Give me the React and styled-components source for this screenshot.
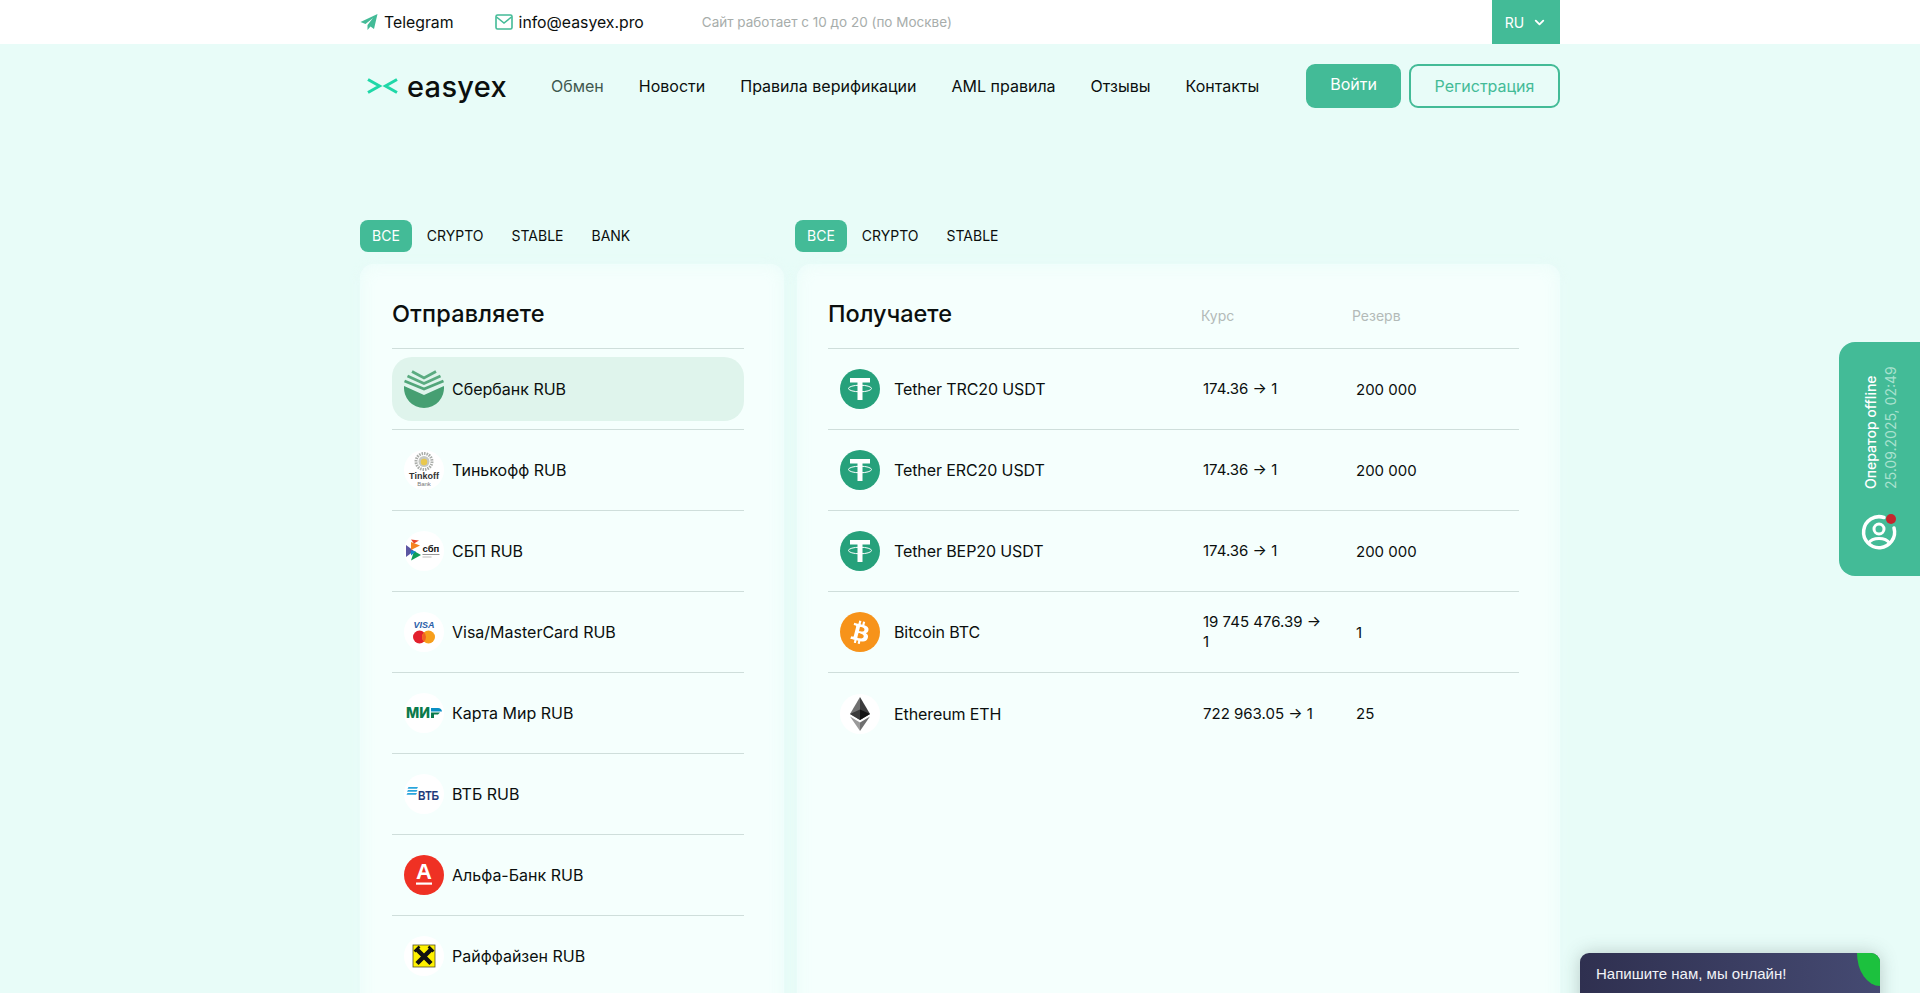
import styled, { createGlobalStyle } from "styled-components"
import { FaBtc } from "react-icons/fa"
import { ChevronDown } from "lucide-react"

const green = "#43bb97"

const GlobalStyle = createGlobalStyle`
    * { box-sizing: border-box; }
    html, body { margin: 0; height: 100%; overflow: hidden; }
    body {
        background: #e8fcf8;
        color: #0b0f0e;
        font-family: Inter, "Noto Sans", sans-serif;
        font-size: 16px;
    }
`

const Page = styled.div`
    height: 993px;
    overflow: hidden;
    position: relative;
`

const Container = styled.div`
    width: 1200px;
    margin: 0 auto;
`

const TopBar = styled.div`
    background: #fff;
    height: 44px;
`

const TopInner = styled(Container)`
    display: flex;
    align-items: center;
    height: 100%;
`

const TopLink = styled.a`
    display: flex;
    align-items: center;
    gap: 6px;
    margin-right: 41px;
    font-size: 15.8px;
    color: #0b0f0e;
`

const Schedule = styled.span`
    margin-left: 17px;
    font-size: 13.5px;
    color: #a7adab;
`

const Lang = styled.div`
    margin-left: auto;
    width: 68px;
    height: 44px;
    background: ${green};
    color: #fff;
    font-size: 14px;
    display: flex;
    align-items: center;
    justify-content: center;
    gap: 8px;
`

const Header = styled(Container)`
    display: flex;
    align-items: center;
    padding: 20px 0;
`

const Logo = styled.div`
    width: 191px;
    padding-left: 7px;
    display: flex;
    align-items: center;
    gap: 9px;
    font-size: 29px;
    font-weight: 500;
    line-height: 1;
    letter-spacing: 0.3px;
`

const Nav = styled.nav`
    display: flex;
    gap: 35px;
`

const NavLink = styled.a`
    font-size: 16px;
    color: ${(p) => (p.$active ? "#40584f" : "#0b0f0e")};
`

const Actions = styled.div`
    margin-left: auto;
    display: flex;
    gap: 8px;
`

const Button = styled.button`
    height: 44px;
    border-radius: 9px;
    font-family: inherit;
    font-size: 16px;
    border: 2px solid ${green};
    background: ${(p) => (p.$outline ? "transparent" : green)};
    color: ${(p) => (p.$outline ? "#43bb97" : "#fff")};
    width: ${(p) => (p.$outline ? "151px" : "95px")};
    padding: ${(p) => (p.$outline ? "0" : "0 0 4px")};
`

const Columns = styled(Container)`
    display: grid;
    grid-template-columns: 424px 763px;
    column-gap: 13px;
    row-gap: 12px;
    padding-top: 92px;
`

const Tabs = styled.div`
    display: flex;
    align-items: center;
    height: 32px;
    margin-left: ${(p) => (p.$shift ? "-2px" : "0")};
`

const Tab = styled.button`
    height: 32px;
    padding: 0 12px 2px;
    margin-right: ${(p) => (p.$active ? "3px" : "4px")};
    border: 0;
    border-radius: 8px;
    font-family: inherit;
    font-size: 14px;
    color: ${(p) => (p.$active ? "#fff" : "#0b0f0e")};
    background: ${(p) => (p.$active ? green : "transparent")};
`

const Panel = styled.section`
    background: #f5fffd;
    border-radius: 14px;
    box-shadow: inset 0 0 16px rgba(232, 252, 248, 0.9), 0 0 12px rgba(232, 252, 248, 0.6);
    padding: 0 ${(p) => p.$right}px 0 ${(p) => p.$left}px;
    height: 900px;
`

const PanelHead = styled.div`
    display: flex;
    align-items: center;
    height: 85px;
    padding-top: 14px;
    border-bottom: 1px solid #cfdedb;
`

const Title = styled.h2`
    margin: 0;
    font-size: 23.5px;
    font-weight: 500;
    letter-spacing: ${(p) => (p.$grow ? "0" : "0.2px")};
    flex: ${(p) => (p.$grow ? "0 0 373px" : "none")};
`

const ColumnHint = styled.span`
    font-size: 14px;
    color: #b3bab8;
    padding-top: 4px;
    flex: 0 0 151px;
`

const Row = styled.div`
    display: flex;
    align-items: center;
    height: 81px;
    border-bottom: ${(p) => (p.$last ? "0" : "1px solid #cfdedb")};
`

const RowBody = styled.div`
    display: flex;
    align-items: center;
    gap: 8px;
    width: 100%;
    height: 64px;
    padding-left: 12px;
    border-radius: 20px;
    background: ${(p) => (p.$active ? "#dff4ec" : "transparent")};
`

const RateRow = styled(Row)`
    padding-left: 12px;
    font-size: 15px;
`

const RateName = styled.div`
    display: flex;
    align-items: center;
    gap: 14px;
    flex: 0 0 363px;
    font-size: 16px;
    letter-spacing: -0.1px;
`

const Rate = styled.div`
    flex: 0 0 122px;
    margin-right: 31px;
    line-height: 20px;
`

const Mark = styled.svg`
    width: 40px;
    height: 40px;
    flex: none;
    display: block;
`

const BtcMark = styled.div`
    width: 40px;
    height: 40px;
    flex: none;
    border-radius: 50%;
    background: #f7931a;
    color: #fff;
    display: flex;
    align-items: center;
    justify-content: center;
    font-size: 23px;
    svg { transform: rotate(14deg); }
`

const Operator = styled.aside`
    position: absolute;
    top: 342px;
    right: 0;
    width: 81px;
    height: 234px;
    background: ${green};
    border-radius: 16px 0 0 16px;
    display: flex;
    flex-direction: column;
    align-items: center;
    padding-top: 32px;
`

const OperatorText = styled.div`
    writing-mode: vertical-rl;
    transform: rotate(180deg);
    display: flex;
    flex-direction: column;
    height: 115px;
    gap: 2px;
    font-size: 14px;
    line-height: 18px;
    margin-right: -2px;
    white-space: nowrap;
`

const OperatorName = styled.span`
    color: #fff;
    font-weight: 500;
`

const OperatorDate = styled.span`
    color: #a9e2cf;
`

const OperatorIcon = styled.svg`
    width: 38px;
    height: 38px;
    margin: 24px 0 0 -2px;
`

const Chat = styled.div`
    position: absolute;
    left: 1580px;
    top: 953px;
    width: 300px;
    height: 60px;
    padding: 12px 16px;
    background: linear-gradient(90deg, #2f3050, #454a72);
    border-radius: 9px 9px 0 0;
    box-shadow: 0 0 18px rgba(60, 80, 80, 0.28);
    color: #f2f3f7;
    font-family: "Liberation Sans", Arial, sans-serif;
    font-size: 15px;
    line-height: 18px;
    overflow: hidden;
`

const ChatLeaf = styled.span`
    position: absolute;
    top: 0;
    right: 0;
    width: 23px;
    height: 33px;
    background: #1cc13e;
    border-radius: 0 0 0 100%;
`

function TelegramIcon() {
    return (
        <svg width="18" height="18" viewBox="0 0 18 18">
            <path d="M17.5 1 .5 9l5 2 7.500-6-5.500 7v5l3-3.500 3.500 2.500z" fill={green} />
        </svg>
    )
}

function MailIcon() {
    return (
        <svg width="18" height="16" viewBox="0 0 18 16" fill="none" stroke={green} strokeWidth="1.6">
            <rect x="1" y="1" width="16" height="14" rx="1.5" />
            <path d="M1.5 3 9 9l7.500-6" />
        </svg>
    )
}

function LogoMark() {
    return (
        <svg width="31" height="16" viewBox="0 0 31 16" fill="none" stroke="#1fd8a8" strokeWidth="3">
            <path d="M1 1.5 12.500 8 1 14.500" />
            <path d="M30 1.5 18.500 8 30 14.500" />
        </svg>
    )
}

function Sber() {
    return (
        <Mark viewBox="0 -2 40 40">
            <path d="M.1 15 20 24 39.900 15A20 20 0 1 1 .1 15z" fill="#469f72" />
            <path d="M.5 10 20 18 39.500 10" fill="none" stroke="#52a67a" strokeWidth="2.800" />
            <path d="M3.500 5 20 12.500 36.500 5" fill="none" stroke="#5aab80" strokeWidth="2.800" />
            <path d="M8 .5 20 7 32 .5" fill="none" stroke="#5aab80" strokeWidth="2.800" />
        </Mark>
    )
}

function Tinkoff() {
    return (
        <Mark viewBox="0 0 40 40">
            <circle cx="20" cy="20" r="20" fill="#fff" />
            <circle cx="20" cy="11.500" r="8" fill="none" stroke="#a9aca8" strokeWidth="3" strokeDasharray="1.500 1" />
            <circle cx="20" cy="11.500" r="5.500" fill="#c6c8c2" />
            <circle cx="20" cy="12" r="3.200" fill="#e9c84d" />
            <text x="20" y="28.500" textAnchor="middle" fontFamily="Liberation Sans" fontWeight="700" fontSize="9" fill="#333">Tinkoff</text>
            <text x="20" y="36" textAnchor="middle" fontFamily="Liberation Sans" fontSize="6" fill="#777">Bank</text>
        </Mark>
    )
}

function Sbp() {
    return (
        <Mark viewBox="0 0 40 40">
            <circle cx="20" cy="20" r="20" fill="#fff" />
            <path d="M2 14l8 6-8 6z" fill="#5b57a2" />
            <path d="M7 11l9 3.500-9 4.500z" fill="#f58220" />
            <path d="M7 8.500l8 1-5 3z" fill="#e8452c" />
            <path d="M10 20l7 4-10 5.500z" fill="#0f9d58" />
            <path d="M7 19.500l5 1-5 4z" fill="#1487c9" />
            <text x="18.500" y="20.500" fontFamily="Liberation Sans" fontWeight="700" fontSize="9.500" fill="#111">сбп</text>
            <rect x="18.500" y="23" width="17" height="1" fill="#999" />
            <rect x="18.500" y="25.500" width="9" height="1" fill="#bbb" />
        </Mark>
    )
}

function Visa() {
    return (
        <Mark viewBox="0 0 40 40">
            <circle cx="20" cy="20" r="20" fill="#fff" />
            <text x="20" y="16" textAnchor="middle" fontFamily="Liberation Sans" fontWeight="700" fontStyle="italic" fontSize="9" fill="#2a5ea8">VISA</text>
            <circle cx="15.500" cy="25" r="6.500" fill="#e2202c" />
            <circle cx="24.500" cy="25" r="6.500" fill="#f79e1b" />
            <path d="M20 20.300a6.500 6.500 0 0 1 0 9.400 6.500 6.500 0 0 1 0-9.400z" fill="#f26122" />
        </Mark>
    )
}

function Mir() {
    return (
        <Mark viewBox="0 0 40 40">
            <circle cx="20" cy="20" r="20" fill="#fff" />
            <text x="2" y="25" fontFamily="Inter" fontWeight="800" fontSize="14" fill="#0b7a4b" textLength="24" lengthAdjust="spacingAndGlyphs">МИ</text>
            <path d="M27 15h7a4 4 0 0 1 4 3.500H27z" fill="#0a8fc4" />
            <path d="M27 19.500h9l-2 2h-4V25h-3z" fill="#0b7a4b" />
        </Mark>
    )
}

function Vtb() {
    return (
        <Mark viewBox="0 0 40 40">
            <circle cx="20" cy="20" r="20" fill="#fff" />
            <path d="M4.500 13H14l-1 1.800H3.500zM4 16H13.500l-1 1.800H3zM3.500 19H13l-1 1.800H2.500z" fill="#2aa5dc" />
            <text x="14" y="25.500" fontFamily="Liberation Sans" fontWeight="700" fontSize="12.500" fill="#1f3a7a" textLength="21" lengthAdjust="spacingAndGlyphs">ВТБ</text>
        </Mark>
    )
}

function Alfa() {
    return (
        <Mark viewBox="0 0 40 40">
            <circle cx="20" cy="20" r="20" fill="#ef3124" />
            <text x="20" y="24" textAnchor="middle" fontFamily="Liberation Sans" fontWeight="700" fontSize="22" fill="#fff">А</text>
            <rect x="12" y="27.500" width="16" height="2.200" fill="#fff" />
        </Mark>
    )
}

function Raiffeisen() {
    return (
        <Mark viewBox="0 0 40 40">
            <circle cx="20" cy="20" r="20" fill="#fff" />
            <rect x="9" y="9" width="22" height="22" fill="#fff100" stroke="#55532a" strokeWidth="0.8" />
            <path d="M13 27.500 27 13.500M13 13.500l14 14" stroke="#111" strokeWidth="4.500" />
            <path d="M10.500 15.500l5-5M24.500 10.500l5 5" stroke="#111" strokeWidth="2.500" />
        </Mark>
    )
}

function Tether() {
    return (
        <Mark viewBox="0 0 40 40">
            <circle cx="20" cy="20" r="20" fill="#26a17b" />
            <path d="M10 9h20v4.500h-7.500V31h-5V13.500H10z" fill="#fff" />
            <ellipse cx="20" cy="19.500" rx="11.500" ry="3.300" fill="none" stroke="#fff" strokeWidth="1" />
        </Mark>
    )
}

function Bitcoin() {
    return (
        <BtcMark>
            <FaBtc />
        </BtcMark>
    )
}

function Ethereum() {
    return (
        <Mark viewBox="0 0 40 40">
            <circle cx="20" cy="20" r="20" fill="#fff" />
            <path d="M20 3 10 20l10 6z" fill="#6f6f6f" />
            <path d="M20 3l10 17-10 6z" fill="#3c3c3d" />
            <path d="M10 20l10-4.500V26z" fill="#3a3a3a" />
            <path d="M30 20l-10-4.500V26z" fill="#141414" />
            <path d="M10 22.500 20 37V28.500z" fill="#9a9a9a" />
            <path d="M30 22.500 20 37V28.500z" fill="#6f6f6f" />
        </Mark>
    )
}

const sendList = [
    { name: "Сбербанк RUB", Icon: Sber, active: true },
    { name: "Тинькофф RUB", Icon: Tinkoff },
    { name: "СБП RUB", Icon: Sbp },
    { name: "Visa/MasterCard RUB", Icon: Visa },
    { name: "Карта Мир RUB", Icon: Mir },
    { name: "ВТБ RUB", Icon: Vtb },
    { name: "Альфа-Банк RUB", Icon: Alfa },
    { name: "Райффайзен RUB", Icon: Raiffeisen },
]

const receiveList = [
    { name: "Tether TRC20 USDT", Icon: Tether, rate: "174.36 → 1", reserve: "200 000" },
    { name: "Tether ERC20 USDT", Icon: Tether, rate: "174.36 → 1", reserve: "200 000" },
    { name: "Tether BEP20 USDT", Icon: Tether, rate: "174.36 → 1", reserve: "200 000" },
    { name: "Bitcoin BTC", Icon: Bitcoin, rate: "19 745 476.39 → 1", reserve: "1" },
    { name: "Ethereum ETH", Icon: Ethereum, rate: "722 963.05 → 1", reserve: "25", last: true },
]

const menu = ["Обмен", "Новости", "Правила верификации", "AML правила", "Отзывы", "Контакты"]

export default function App() {
    return (
        <Page>
            <GlobalStyle />
            <TopBar>
                <TopInner>
                    <TopLink><TelegramIcon />Telegram</TopLink>
                    <TopLink><MailIcon />info@easyex.pro</TopLink>
                    <Schedule>Сайт работает с 10 до 20 (по Москве)</Schedule>
                    <Lang>RU <ChevronDown size={15} strokeWidth={3} /></Lang>
                </TopInner>
            </TopBar>

            <Header>
                <Logo><LogoMark />easyex</Logo>
                <Nav>
                    {menu.map((item, i) => (
                        <NavLink key={item} $active={i === 0}>{item}</NavLink>
                    ))}
                </Nav>
                <Actions>
                    <Button>Войти</Button>
                    <Button $outline>Регистрация</Button>
                </Actions>
            </Header>

            <Columns>
                <Tabs>
                    <Tab $active>ВСЕ</Tab>
                    <Tab>CRYPTO</Tab>
                    <Tab>STABLE</Tab>
                    <Tab>BANK</Tab>
                </Tabs>
                <Tabs $shift>
                    <Tab $active>ВСЕ</Tab>
                    <Tab>CRYPTO</Tab>
                    <Tab>STABLE</Tab>
                </Tabs>

                <Panel $left={32} $right={40}>
                    <PanelHead>
                        <Title>Отправляете</Title>
                    </PanelHead>
                    {sendList.map(({ name, Icon, active }) => (
                        <Row key={name}>
                            <RowBody $active={active}>
                                <Icon />
                                {name}
                            </RowBody>
                        </Row>
                    ))}
                </Panel>

                <Panel $left={31} $right={41}>
                    <PanelHead>
                        <Title $grow>Получаете</Title>
                        <ColumnHint>Курс</ColumnHint>
                        <ColumnHint>Резерв</ColumnHint>
                    </PanelHead>
                    {receiveList.map(({ name, Icon, rate, reserve, last }) => (
                        <RateRow key={name} $last={last}>
                            <RateName>
                                <Icon />
                                {name}
                            </RateName>
                            <Rate>{rate}</Rate>
                            <div>{reserve}</div>
                        </RateRow>
                    ))}
                </Panel>
            </Columns>

            <Operator>
                <OperatorText>
                    <OperatorName>Оператор offline</OperatorName>
                    <OperatorDate>25.09.2025, 02:49</OperatorDate>
                </OperatorText>
                <OperatorIcon viewBox="0 0 38 38" fill="none" stroke="#fff" strokeWidth="3.500">
                    <path d="M24 4.500A15.500 15.500 0 1 0 34 15" strokeLinecap="round" />
                    <circle cx="19" cy="16" r="5" strokeWidth="3" />
                    <path d="M8.500 30c4-6 17-6 21 0" strokeWidth="3" />
                    <circle cx="31" cy="6" r="5" fill="#c4262e" stroke="none" />
                </OperatorIcon>
            </Operator>

            <Chat>
                Напишите нам, мы онлайн!
                <ChatLeaf />
            </Chat>
        </Page>
    )
}
